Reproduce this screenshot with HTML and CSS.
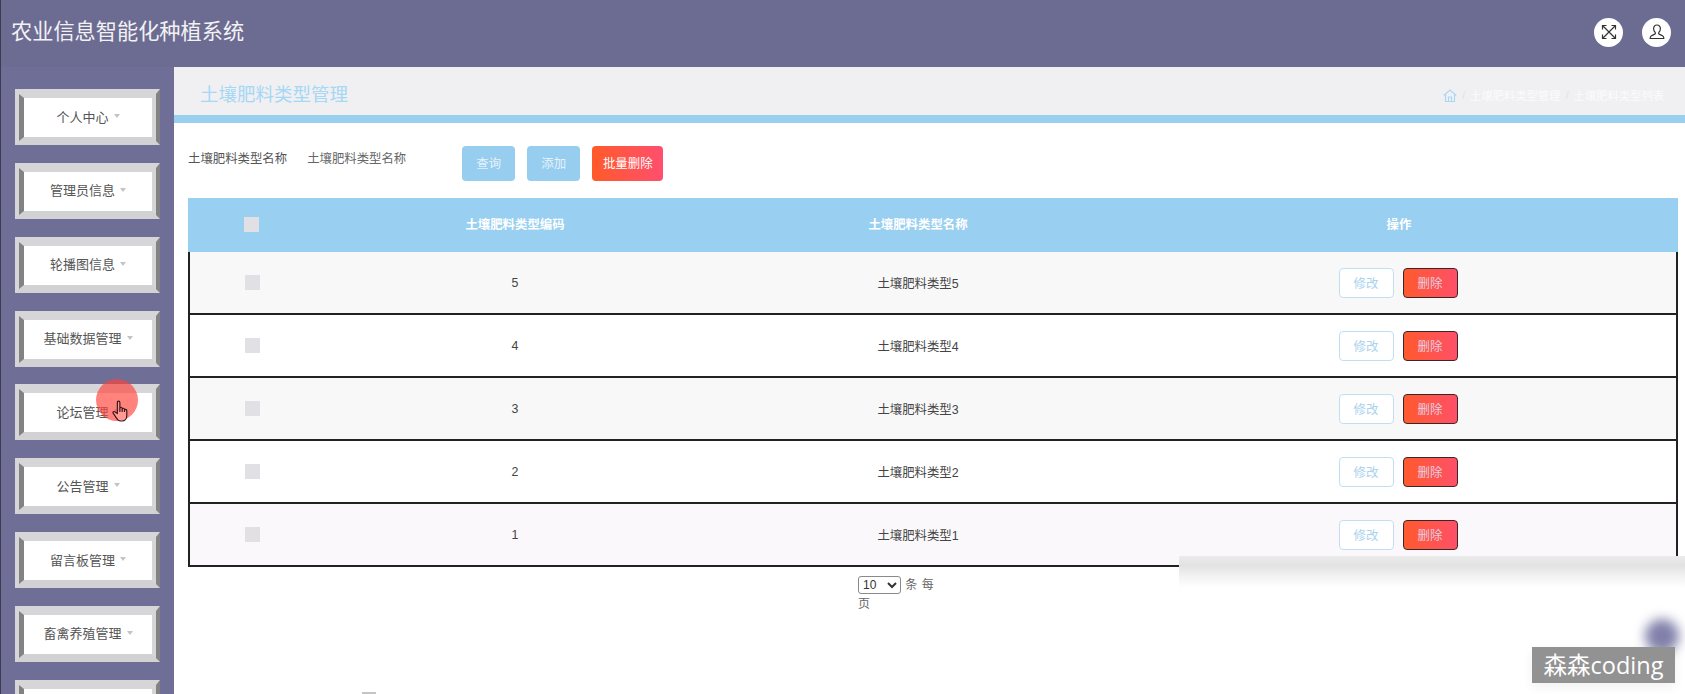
FILE: index.html
```html
<!DOCTYPE html>
<html lang="zh-CN">
<head>
<meta charset="utf-8">
<title>农业信息智能化种植系统</title>
<link rel="stylesheet" href="styles.css">
</head>
<body>
<div class="app">
  <header class="topbar">
    <h1 class="brand">农业信息智能化种植系统</h1>
    <div class="top-actions">
      <span class="round-icon">
        <svg viewBox="0 0 20 20" width="20" height="20" fill="none" stroke="#333" stroke-width="1.2">
          <path d="M4 4l12 12M16 4L4 16"/>
          <path d="M3.5 7.5v-4h4M12.5 3.5h4v4M16.5 12.5v4h-4M7.5 16.5h-4v-4"/>
        </svg>
      </span>
      <span class="round-icon">
        <svg viewBox="0 0 20 20" width="20" height="20" fill="none" stroke="#333" stroke-width="1.2">
          <path d="M10 3c-2.3 0-3.4 1.700-3.400 3.700 0 1.600.6 2.800 1.500 3.600.4.4.4 1.300-.1 1.700-1 .8-3.500 1.300-4.300 2.500-.4.6-.5 1.300-.5 2h13.600c0-.7-.1-1.400-.5-2-.8-1.200-3.300-1.700-4.300-2.500-.5-.4-.5-1.300-.1-1.700.9-.8 1.500-2 1.500-3.600C13.400 4.700 12.300 3 10 3z"/>
        </svg>
      </span>
    </div>
  </header>
  <div class="body-row">
    <nav class="sidebar">
      <a class="nav-btn"><span class="nav-inner">个人中心<i class="caret"></i></span></a>
      <a class="nav-btn"><span class="nav-inner">管理员信息<i class="caret"></i></span></a>
      <a class="nav-btn"><span class="nav-inner">轮播图信息<i class="caret"></i></span></a>
      <a class="nav-btn"><span class="nav-inner">基础数据管理<i class="caret"></i></span></a>
      <a class="nav-btn"><span class="nav-inner">论坛管理<i class="caret"></i></span></a>
      <a class="nav-btn"><span class="nav-inner">公告管理<i class="caret"></i></span></a>
      <a class="nav-btn"><span class="nav-inner">留言板管理<i class="caret"></i></span></a>
      <a class="nav-btn"><span class="nav-inner">畜禽养殖管理<i class="caret"></i></span></a>
      <a class="nav-btn"><span class="nav-inner">&nbsp;</span></a>
    </nav>
    <main class="main">
      <div class="crumbbar">
        <h2 class="page-title">土壤肥料类型管理</h2>
        <div class="crumbs">
          <svg class="home" viewBox="0 0 14 13" width="14" height="13" fill="none" stroke="#a9d8f3" stroke-width="1.1">
            <path d="M.8 6.500L7 1l6.200 5.500M2.500 5.500v7h9v-7M5.500 12.500V8h3v4.500"/>
          </svg>
          <span class="sep">/</span><span>土壤肥料类型管理</span><span class="sep">/</span><span>土壤肥料类型列表</span>
        </div>
      </div>
      <div class="search-row">
        <span class="field-label">土壤肥料类型名称</span>
        <span class="field-hint">土壤肥料类型名称</span>
        <button class="btn btn-blue">查询</button>
        <button class="btn btn-blue">添加</button>
        <button class="btn btn-red btn-wide">批量删除</button>
      </div>
      <table class="grid">
        <colgroup>
          <col class="col-check"><col class="col-code"><col class="col-name"><col class="col-ops">
        </colgroup>
        <thead>
          <tr>
            <th><i class="check"></i></th>
            <th>土壤肥料类型编码</th>
            <th>土壤肥料类型名称</th>
            <th class="ops">操作</th>
          </tr>
        </thead>
        <tbody>
          <tr>
            <td><i class="check"></i></td><td>5</td><td>土壤肥料类型5</td>
            <td class="ops"><button class="mini mini-edit">修改</button><button class="mini mini-del">删除</button></td>
          </tr>
          <tr>
            <td><i class="check"></i></td><td>4</td><td>土壤肥料类型4</td>
            <td class="ops"><button class="mini mini-edit">修改</button><button class="mini mini-del">删除</button></td>
          </tr>
          <tr>
            <td><i class="check"></i></td><td>3</td><td>土壤肥料类型3</td>
            <td class="ops"><button class="mini mini-edit">修改</button><button class="mini mini-del">删除</button></td>
          </tr>
          <tr>
            <td><i class="check"></i></td><td>2</td><td>土壤肥料类型2</td>
            <td class="ops"><button class="mini mini-edit">修改</button><button class="mini mini-del">删除</button></td>
          </tr>
          <tr>
            <td><i class="check"></i></td><td>1</td><td>土壤肥料类型1</td>
            <td class="ops"><button class="mini mini-edit">修改</button><button class="mini mini-del">删除</button></td>
          </tr>
        </tbody>
      </table>
      <div class="pager">
        <select class="page-size"><option>10</option><option>20</option></select> 条 每 页
      </div>
      <div class="next-cut"></div>
    </main>
  </div>
</div>

<div class="smear"></div>
<div class="blur-dot"></div>
<div class="watermark">森森coding</div>
<div class="click-dot"></div>
<svg class="hand" viewBox="0 0 16 21" width="17" height="22" fill="rgba(255,200,195,.35)" stroke="#3a1414" stroke-width="1.1" stroke-linejoin="round">
  <path d="M5 13V2.300a1.200 1.200 0 0 1 2.400 0V8a1.100 1.100 0 0 1 2.200 0v1a1.100 1.100 0 0 1 2.200 0v1a1.100 1.100 0 0 1 2.200 0v5c0 3-2 5-4.500 5H8c-2 0-3-1-4-3l-3-4.500c-.6-1 .8-2 1.600-1.200L5 13z"/>
  <path d="M7.400 8v3.500M9.600 9v2.500M11.800 10v1.500"/>
</svg>
</body>
</html>
```

FILE: styles.css
```css
* { box-sizing: border-box; }

html, body {
  margin: 0;
  height: 100%;
  overflow: hidden;
}

body {
  background: #fff;
  font-family: "Liberation Sans", "Noto Sans CJK SC", sans-serif;
  font-size: 12.4px;
  color: #444;
}

.app {
  width: 1685px;
  height: 694px;
  display: flex;
  flex-direction: column;
  border-left: 1px solid #3c3c50;
  overflow: hidden;
}

/* Top bar */
.topbar {
  flex: 0 0 67px;
  background: #6c6c92;
  display: flex;
  align-items: center;
  justify-content: space-between;
  padding: 0 14px 3px 10px;
}

.brand {
  margin: 0;
  font-size: 21.2px;
  font-weight: 400;
  color: #f2f2f4;
  line-height: 1;
}

.top-actions {
  display: flex;
  gap: 19px;
}

.round-icon {
  width: 29px;
  height: 29px;
  border-radius: 50%;
  background: #fff;
  display: flex;
  align-items: center;
  justify-content: center;
}

/* Layout row */
.body-row {
  flex: 1;
  display: flex;
  min-height: 0;
}

/* Sidebar */
.sidebar {
  flex: 0 0 173px;
  background: #6f6e96;
  padding: 22px 0 0 14px;
  display: flex;
  flex-direction: column;
  gap: 17.85px;
  overflow: hidden;
}

.nav-btn {
  flex: 0 0 56px;
  width: 145px;
  border-style: solid;
  border-width: 5px 4px 4px 4px;
  border-color: #d6d6d8 #828282 #d2d2d4 #d6d6d8;
  display: block;
}

.nav-inner {
  display: flex;
  align-items: center;
  justify-content: center;
  height: 47px;
  padding-bottom: 3px;
  background: #fff;
  border-style: solid;
  border-width: 4px 4px 4px 5px;
  border-color: #d6d6d8 #d6d6d8 #d2d2d4 #828282;
  font-size: 13px;
  color: #555;
}

.caret {
  margin-left: 5px;
  width: 0;
  height: 0;
  border-style: solid;
  border-width: 4px 3px 0;
  border-color: #c4c4c4 transparent transparent;
}

/* Main column */
.main {
  flex: 1;
  min-width: 0;
  background: #fff;
}

.crumbbar {
  height: 56px;
  padding: 8px 21px 0 26px;
  background: #f0f0f3;
  border-bottom: 8px solid #99d0f0;
  display: flex;
  align-items: center;
  justify-content: space-between;
}

.page-title {
  margin: 0;
  font-size: 18.500px;
  font-weight: 400;
  color: #a6d7f5;
  line-height: 1;
}

.crumbs {
  display: flex;
  align-items: center;
  font-size: 11.300px;
  color: #fbfbfd;
}

.sep {
  margin: 0 5px;
  color: #cfe7f7;
}

/* Search */
.search-row {
  display: flex;
  align-items: flex-start;
  padding: 23px 0 0 14px;
  margin-bottom: 17px;
}

.field-label,
.field-hint {
  line-height: 26px;
  color: #555;
  white-space: nowrap;
}

.field-hint {
  margin-left: 20px;
  margin-right: 56px;
  color: #666;
}

.btn {
  width: 53px;
  height: 35px;
  margin-right: 12px;
  border: 0;
  border-radius: 4px;
  font: inherit;
  font-size: 12.400px;
  color: #e4f2fb;
  padding: 0 0 2px;
}

.btn-blue { background: #97cdee; }

.btn-red {
  background: linear-gradient(90deg, #ff5a2a, #ff4f6e);
  color: #fff;
}

.btn-wide { width: 71px; }

/* Table */
.grid {
  width: 1490px;
  margin-left: 14px;
  border-collapse: separate;
  border-spacing: 0;
  table-layout: fixed;
}

.col-check { width: 126px; }
.col-code { width: 402px; }
.col-name { width: 404px; }
.col-ops { width: 558px; }

.grid th {
  height: 54px;
  padding: 0 0 2px;
  background: #99cff0;
  color: #fff;
  font-size: 12.400px;
  font-weight: 700;
  text-align: center;
}

.grid td {
  height: 63px;
  padding: 0;
  text-align: center;
  color: #444;
  border-bottom: 2px solid #222;
}

.grid td:first-child { border-left: 2px solid #222; }
.grid td:last-child { border-right: 2px solid #222; }

.grid tbody tr:nth-child(odd) td { background: #f9f8f9; }
.grid tbody tr:last-child td { background: #fbf8fb; }

.check {
  display: inline-block;
  width: 15px;
  height: 15px;
  background: #e0e0e5;
  vertical-align: middle;
}

.mini {
  width: 55px;
  height: 30px;
  border-radius: 4px;
  font: inherit;
  font-size: 12.400px;
  padding: 0;
  vertical-align: middle;
}

.mini-edit {
  background: #fff;
  border: 1px solid #c2dff2;
  color: #a9d3ef;
  margin-right: 9px;
}

.mini-del {
  background: linear-gradient(90deg, #ff5a2e, #ff5068);
  border: 1px solid #3a2628;
  color: #e6cfe0;
}

/* Page size */
.pager {
  width: 78px;
  margin: 9px 0 0 684px;
  font-size: 12px;
  line-height: 19px;
  color: #666;
  word-spacing: 1px;
}

.page-size {
  width: 43px;
  height: 18px;
  padding: 0;
  font-family: "Liberation Sans", sans-serif;
  font-size: 12px;
  color: #333;
  background: #fff;
  border: 1px solid #8a8a8a;
  border-radius: 3px;
  vertical-align: top;
}

/* Top edge of the next block, cut off by the window */
.next-cut {
  width: 14px;
  height: 2px;
  margin: 78px 0 0 188px;
  background: #c4c4c4;
}

/* Video overlays on top of the page */
.smear {
  position: absolute;
  left: 1179px;
  top: 556px;
  right: 0;
  height: 32px;
  background: linear-gradient(180deg, #ebebeb 0%, #e2e2e3 30%, #f3f3f3 65%, #fff 100%);
}

.blur-dot {
  position: absolute;
  left: 1645px;
  top: 619px;
  width: 34px;
  height: 34px;
  border-radius: 50%;
  background: #8080aa;
  filter: blur(6px);
}

.watermark {
  position: absolute;
  left: 1532px;
  top: 647px;
  width: 143px;
  height: 36px;
  background: #929292;
  color: #fff;
  font-family: "Open Sans", "Noto Sans CJK SC", sans-serif;
  font-size: 23.500px;
  line-height: 36px;
  text-align: center;
  white-space: nowrap;
  box-shadow: 0 4px 12px rgba(0, 0, 0, .06);
}

.click-dot {
  position: absolute;
  left: 96px;
  top: 379px;
  width: 42px;
  height: 42px;
  border-radius: 50%;
  background: rgba(255, 66, 58, .66);
}

.hand {
  position: absolute;
  left: 112px;
  top: 400px;
}
```
